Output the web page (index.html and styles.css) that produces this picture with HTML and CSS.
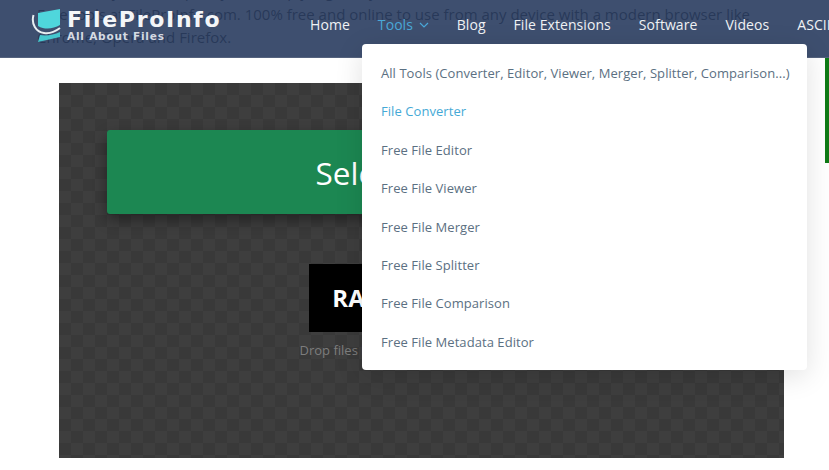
FILE: index.html
```html
<!DOCTYPE html>
<html lang="en">
<head>
<meta charset="utf-8">
<title>FileProInfo</title>
<link rel="stylesheet" href="styles.css">
</head>
<body>
<header class="topbar">
  <a class="logo">
    <svg class="logo-mark" width="36" height="34" viewBox="0 0 36 34" aria-hidden="true">
      <path d="M7 5 L29 1 L29 17 C22 21 14 22 7 18 Z" fill="#4fd6dc"/>
      <path d="M9 27 C15 28 23 27 29 24 L29 29 L7 34 Z" fill="#45c8cf"/>
      <path d="M2.5 7 C0 16 5 24 13 25 C19 26 25 23 29 20" fill="none" stroke="#e8eef2" stroke-width="2"/>
    </svg>
    <span class="logo-text">
      <span class="logo-name">FileProInfo</span>
      <span class="logo-tag">All About Files</span>
    </span>
  </a>
  <nav class="nav">
    <a class="nav-link">Home</a>
    <a class="nav-link nav-active">Tools
      <svg class="chev" width="10" height="6" viewBox="0 0 10 6" aria-hidden="true"><path d="M1 1 L5 5 L9 1" fill="none" stroke="#4aa8d8" stroke-width="1.2"/></svg>
    </a>
    <a class="nav-link">Blog</a>
    <a class="nav-link">File Extensions</a>
    <a class="nav-link">Software</a>
    <a class="nav-link">Videos</a>
    <a class="nav-link">ASCII</a>
  </nav>
</header>

<ul class="menu">
  <li>All Tools (Converter, Editor, Viewer, Merger, Splitter, Comparison...)</li>
  <li class="menu-active">File Converter</li>
  <li>Free File Editor</li>
  <li>Free File Viewer</li>
  <li>Free File Merger</li>
  <li>Free File Splitter</li>
  <li>Free File Comparison</li>
  <li>Free File Metadata Editor</li>
</ul>

<div class="side-tab"></div>

<main class="page">
  <p class="intro">Work with your files quickly and simply, right in your web browser.<br>Free tools at FileProInfo.com. 100% free and online to use from any device with a modern browser like<br>Chrome, Opera and Firefox.</p>
  <section class="drop">
    <button class="select">Select RAR File</button>
    <div class="badge">RAR Converter</div>
    <p class="hint">Drop files here. 10 MB maximum filesize</p>
  </section>
</main>
</body>
</html>
```

FILE: styles.css
```css
html, body {
  margin: 0;
  height: 470px;
  overflow: hidden;
  background: #fff;
  font-family: "Open Sans", sans-serif;
}

.topbar {
  position: absolute;
  left: 0;
  top: 0;
  width: 829px;
  height: 58px;
  box-sizing: border-box;
  padding-left: 31px;
  display: flex;
  align-items: center;
  background: rgba(41, 60, 95, 0.9);
  border-bottom: 1px solid #55637e;
  z-index: 2;
  overflow: hidden;
}

.logo {
  display: flex;
  align-items: center;
  width: 279px;
  flex: none;
  margin-top: -7px;
}

.logo-mark {
  flex: none;
}

.logo-text {
  display: flex;
  flex-direction: column;
  font-family: "DejaVu Sans", sans-serif;
  font-weight: 700;
  color: #f4f6f8;
}

.logo-name {
  font-size: 22px;
  line-height: 22px;
  letter-spacing: 1.7px;
}

.logo-tag {
  font-size: 10.5px;
  line-height: 11px;
  color: #d5dae2;
  letter-spacing: 0.8px;
}

.nav {
  display: flex;
  gap: 28px;
  white-space: nowrap;
  margin-top: -8px;
}

.nav-link {
  font-size: 14px;
  letter-spacing: 0.07px;
  color: #f0f2f5;
}

.nav-active {
  color: #4aa8d8;
}

.chev {
  margin-left: 2px;
  vertical-align: 2px;
}

.menu {
  position: absolute;
  left: 362px;
  top: 44px;
  width: 445px;
  height: 326px;
  box-sizing: border-box;
  margin: 0;
  padding: 10px 0 0 19px;
  list-style: none;
  background: #fff;
  border-radius: 4px;
  box-shadow: 0 6px 28px rgba(0, 0, 0, 0.12);
  z-index: 3;
}

.menu li {
  height: 38.4px;
  line-height: 38.4px;
  font-size: 13px;
  letter-spacing: 0.06px;
  color: #5b7082;
  white-space: nowrap;
}

.menu .menu-active {
  color: #45a9d6;
}

.side-tab {
  position: absolute;
  left: 825px;
  top: 58px;
  width: 4px;
  height: 105px;
  background: #0f7a16;
}

.page {
  padding: 0 45px 0 59px;
}

.intro {
  margin: -20px 0 0 -22px;
  font-size: 15px;
  line-height: 23px;
  color: #222;
  white-space: nowrap;
}

.drop {
  box-sizing: border-box;
  width: 725px;
  height: 375px;
  margin-top: 34px;
  padding: 47px 48px 0;
  display: flex;
  flex-direction: column;
  align-items: center;
  background-color: #3a3a3a;
  background-image: repeating-conic-gradient(#3e3e3e 0 25%, #393939 0 50%);
  background-size: 24px 24px;
}

.select {
  width: 100%;
  height: 84px;
  flex: none;
  border: 0;
  border-radius: 3px;
  background: #1c8752;
  color: #fff;
  font-family: inherit;
  font-size: 31.5px;
  box-shadow: 0 6px 14px rgba(0, 0, 0, 0.4);
}

.badge {
  margin-top: 50px;
  width: 225px;
  height: 68px;
  background: #000;
  color: #fff;
  font-size: 24px;
  letter-spacing: 0.3px;
  font-weight: 700;
  line-height: 68px;
  text-align: center;
  white-space: nowrap;
}

.hint {
  margin: 9px 0 0;
  font-size: 13px;
  color: #7d7d7d;
  white-space: nowrap;
}
```
